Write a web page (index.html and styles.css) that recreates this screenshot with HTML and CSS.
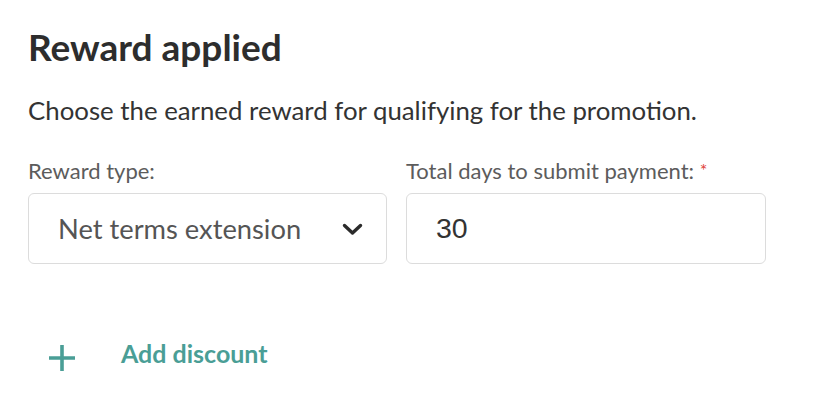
FILE: index.html
```html
<!DOCTYPE html>
<html>
<head>
<meta charset="utf-8">
<link rel="stylesheet" href="styles.css">
</head>
<body>
<div class="panel">
  <h2 class="title">Reward applied</h2>
  <p class="desc">Choose the earned reward for qualifying for the promotion.</p>
  <div class="fields">
    <div class="field">
      <label class="label">Reward type:</label>
      <div class="select">
        <span class="select-text">Net terms extension</span>
        <svg class="chevron" width="21" height="13" viewBox="0 0 21 13"><path d="M2.5 2.5 L10.5 10 L18.5 2.5" fill="none" stroke="#2b2b2b" stroke-width="3.4" stroke-linecap="round" stroke-linejoin="round"/></svg>
      </div>
    </div>
    <div class="field">
      <label class="label">Total days to submit payment: <span class="req">*</span></label>
      <div class="input"><span class="input-text">30</span></div>
    </div>
  </div>
  <div class="add">
    <svg class="plus" width="26" height="26" viewBox="0 0 26 26"><path d="M13 0 V26 M0 13 H26" stroke="#4a9e96" stroke-width="3.6" fill="none"/></svg>
    <span class="add-text">Add discount</span>
  </div>
</div>
</body>
</html>
```
FILE: styles.css
```css
html, body {
  margin: 0;
  padding: 0;
  background: #fff;
}
body {
  font-family: Lato, "Noto Sans", sans-serif;
  color: #333;
}
.panel {
  padding: 25px 28px 0 28px;
}
.title {
  margin: 0;
  font-size: 37px;
  font-weight: 700;
  line-height: 44px;
  color: #2d2d2d;
}
.desc {
  margin: 25px 0 0 0;
  font-size: 25.8px;
  line-height: 32px;
  color: #333;
}
.fields {
  display: flex;
  gap: 19px;
  margin-top: 32px;
}
.field {
  display: flex;
  flex-direction: column;
}
.field:first-child {
  width: 359px;
}
.field:last-child {
  width: 360px;
}
.label {
  font-size: 22px;
  line-height: 26px;
  color: #5c5c5c;
}
.req {
  color: #e0443c;
  font-size: 18px;
  line-height: 18px;
  vertical-align: 2px;
}
.select, .input {
  margin-top: 9px;
  height: 71px;
  box-sizing: border-box;
  border: 1px solid #dcdcdc;
  border-radius: 6px;
  display: flex;
  align-items: center;
}
.select {
  padding: 0 23px 0 29px;
  justify-content: space-between;
}
.select-text {
  font-size: 27.3px;
  color: #555;
}
.chevron {
  margin-top: 1px;
}
.input {
  padding: 0 29px;
}
.input-text {
  font-family: "Liberation Sans", Arial, sans-serif;
  font-size: 28.5px;
  color: #333;
}
.add {
  display: flex;
  align-items: flex-start;
  margin-top: 74px;
  padding-left: 21px;
}
.plus {
  margin-top: 7px;
  margin-right: 46px;
}
.add-text {
  font-size: 25px;
  line-height: 30px;
  font-weight: 700;
  color: #4a9e96;
}
```
